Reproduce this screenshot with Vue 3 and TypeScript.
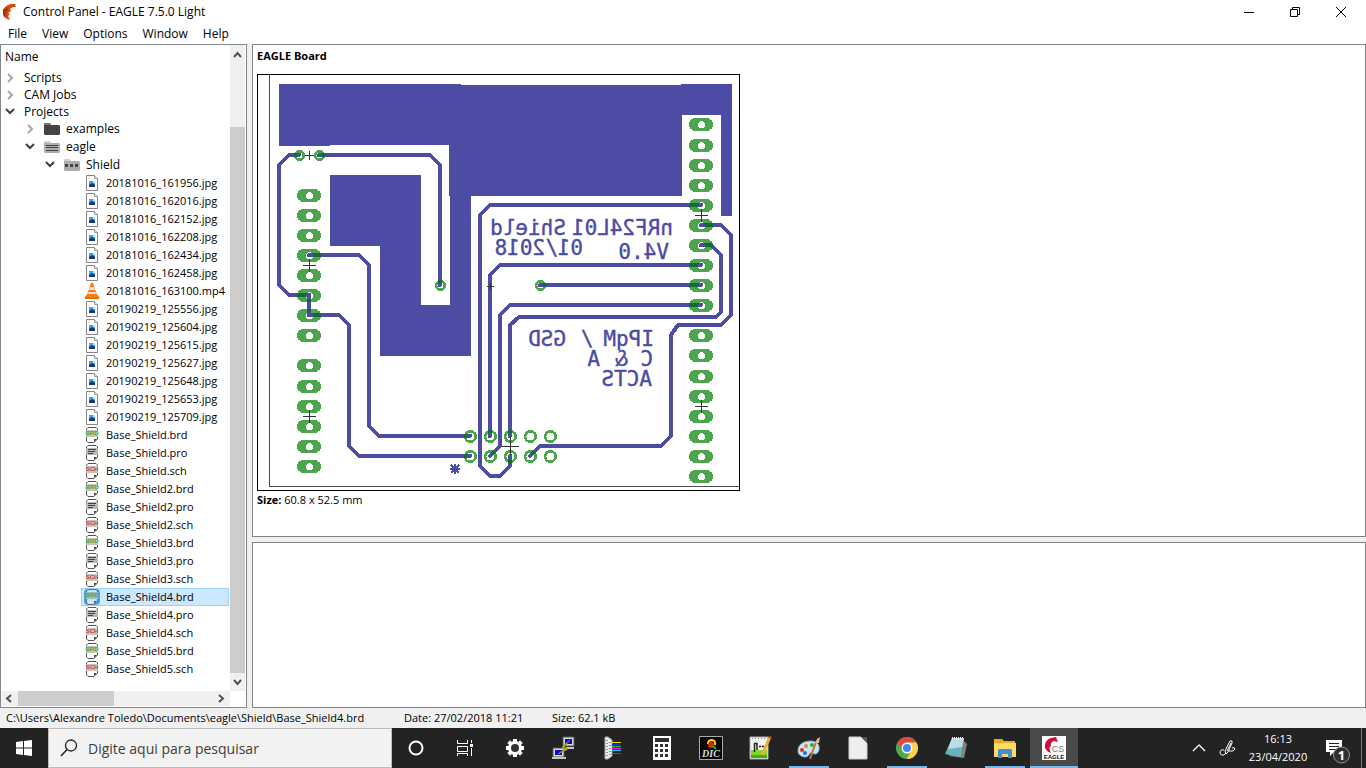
<script setup lang="ts">
interface TreeRow {
  label: string
  depth: number
  icon?: string
  tag?: string
  state?: 'open' | 'closed'
  selected?: boolean
}

const menus: string[] = ['File', 'View', 'Options', 'Window', 'Help']

const roots: TreeRow[] = [
  { label: 'Scripts', depth: 0, state: 'closed' },
  { label: 'CAM Jobs', depth: 0, state: 'closed' },
  { label: 'Projects', depth: 0, state: 'open' },
  { label: 'examples', depth: 1, state: 'closed', icon: 'folder-dark' },
  { label: 'eagle', depth: 1, state: 'open', icon: 'folder-lines' },
  { label: 'Shield', depth: 2, state: 'open', icon: 'folder-dots' },
]

const files: string[] = [
  '20181016_161956.jpg', '20181016_162016.jpg', '20181016_162152.jpg', '20181016_162208.jpg',
  '20181016_162434.jpg', '20181016_162458.jpg', '20181016_163100.mp4', '20190219_125556.jpg',
  '20190219_125604.jpg', '20190219_125615.jpg', '20190219_125627.jpg', '20190219_125648.jpg',
  '20190219_125653.jpg', '20190219_125709.jpg',
  'Base_Shield.brd', 'Base_Shield.pro', 'Base_Shield.sch',
  'Base_Shield2.brd', 'Base_Shield2.pro', 'Base_Shield2.sch',
  'Base_Shield3.brd', 'Base_Shield3.pro', 'Base_Shield3.sch',
  'Base_Shield4.brd', 'Base_Shield4.pro', 'Base_Shield4.sch',
  'Base_Shield5.brd', 'Base_Shield5.sch',
]

const tags: Record<string, string> = { brd: 'BRD', sch: 'SCH' }

const rows: TreeRow[] = [
  ...roots,
  ...files.map((label) => {
    const icon = label.split('.')[1]
    return { label, depth: 3, icon, tag: tags[icon], selected: label === 'Base_Shield4.brd' }
  }),
]

const traces: string[] = [
  'M299 155H289L279 165V285L289 295H309V315H339L349 325V446L359 456H470',
  'M319 155H430L440 165V285',
  'M309 255H359L369 265V426L379 436H470',
  'M701 205H490L480 215V466L490 476H500L510 466V456',
  'M701 265H500L490 275V436',
  'M540 285H701',
  'M701 305H510L500 315V446L490 456',
  'M701 245H711L721 255V312L716 317H519L510 325V436',
  'M701 225H721L731 235V315L721 325H678L671 335V436L661 446H540L530 456',
]

const pads = [
  ...[195, 215, 235, 255, 275, 295, 315, 335, 365, 386, 406, 426, 446, 466].map((y) => ({ x: 309, y, hole: 3.5 })),
  ...[124, 145, 165, 185, 205, 225, 245, 265, 285, 305, 335, 355, 376, 396, 416, 436, 456, 476].map((y) => ({ x: 701, y, hole: 3.5 })),
]

const vias = [
  ...[[299, 155], [319, 155], [440, 285], [540, 285]].map(([x, y]) => ({ x, y, r: 5.5, hole: 3 })),
  ...[470, 490, 510, 530, 550].flatMap((x) => [436, 456].map((y) => ({ x, y, r: 6.5, hole: 4 }))),
]

const holes = [...pads, ...vias]

const crosses: [number, number, number][] = [
  [309, 155, 4], [309, 265, 6], [309, 416, 6], [701, 215, 6], [701, 406, 6], [490, 286, 3], [510, 446, 8],
]

const silk: [string, number, number][] = [
  ['nRF24L01', 673, 235], ['Shield', 566, 235], ['V4.0', 669, 259], ['01/2018', 583, 255],
  ['IPqM', 654, 346], ['/', 593, 346], ['GSD', 566, 346],
  ['C', 653, 366], ['&', 628, 366], ['A', 600, 366], ['ACTS', 652, 386],
]

const apps = [
  { id: 'settings', name: 'Settings' },
  { id: 'putty', name: 'PuTTY' },
  { id: 'port', name: 'Terminal' },
  { id: 'calc', name: 'Calculator' },
  { id: 'dic', name: 'DIC' },
  { id: 'editor', name: 'Notepad++' },
  { id: 'paint', name: 'Paint', open: true },
  { id: 'office', name: 'LibreOffice' },
  { id: 'chrome', name: 'Chrome', open: true },
  { id: 'notes', name: 'Notepad' },
  { id: 'explorer', name: 'File Explorer', open: true },
  { id: 'eagle', name: 'EAGLE', open: true, active: true },
]
</script>

<template>
  <div class="desktop">
    <svg class="defs" aria-hidden="true">
      <symbol id="i-folder-dark" viewBox="0 0 16 16">
        <path d="M0 3V2H6L7 3V4H0Z" fill="#777" /><path d="M0 4H15L16 5V13L15 14H1L0 13Z" fill="#444441" />
      </symbol>
      <symbol id="i-folder-lines" viewBox="0 0 16 16">
        <path d="M0 4V2H6L7 4Z" fill="#d2d2d2" /><path d="M0 4H15L16 5V13L15 14H1L0 13Z" fill="#acacac" />
        <path d="M2 6.500H14M2 8.500H14M2 11.500H14" stroke="#444" />
      </symbol>
      <symbol id="i-folder-dots" viewBox="0 0 16 16">
        <path d="M0 4V2H6L7 4Z" fill="#d2d2d2" /><path d="M0 4H15L16 5V13L15 14H1L0 13Z" fill="#acacac" />
        <path d="M1 7H4V10H1ZM6 7H9V10H6ZM11 7H14V10H11Z" fill="#444" />
      </symbol>
      <symbol id="i-jpg" viewBox="0 0 16 16">
        <path d="M2.500 .5H10.500L13.500 3.500V15.500H2.500Z" fill="#fff" stroke="#858585" />
        <path d="M10.500 .5V3.500H13.500" fill="#eee" stroke="#999" />
        <path d="M5 6H11V12H5Z" fill="#3ca7ea" /><path d="M5 10L8 8L11 10V12H5Z" fill="#14386f" /><path d="M9 6H11V8H9Z" fill="#a7e6ff" />
      </symbol>
      <symbol id="i-mp4" viewBox="0 0 16 16">
        <path d="M7 0H9L13 12H3Z" fill="#f57b10" /><path d="M6 4H10L11 7H5ZM4.500 9H11.500L12 11H4Z" fill="#e6e3df" />
        <path d="M3 10L2 12H14L13 10L15 14V15.500H1V14Z" fill="#ef870d" /><path d="M1 14H15V16H1Z" fill="#e66b00" />
      </symbol>
      <symbol id="i-brd" viewBox="0 0 16 16">
        <path d="M4 .5H12L13.500 2V12L10 15.500H4L2.500 14V2Z" fill="#fff" stroke="#555" />
        <path d="M2 3H14V10H2Z" fill="#bfc5bf" /><path d="M10 15V12H13Z" fill="#444" />
      </symbol>
      <symbol id="i-sch" viewBox="0 0 16 16">
        <path d="M4 .5H12L13.500 2V12L10 15.500H4L2.500 14V2Z" fill="#fff" stroke="#555" />
        <path d="M2 3H14V10H2Z" fill="#c9c1c1" /><path d="M10 15V12H13Z" fill="#444" />
      </symbol>
      <symbol id="i-pro" viewBox="0 0 16 16">
        <path d="M4 .5H12L13.500 2V12L10 15.500H4L2.500 14V2Z" fill="#fff" stroke="#555" />
        <path d="M2 3H14V10H2Z" fill="#b8b8b8" /><path d="M10 15V12H13Z" fill="#444" />
        <path d="M4 4.500H12M4 6.500H11M4 8.500H9" stroke="#444" />
      </symbol>

      <symbol id="a-settings" viewBox="0 0 24 24">
        <g fill="#fff"><path v-for="a in [0, 45, 90, 135]" :key="a" d="M10 3H14V21H10Z" :transform="`rotate(${a} 12 12)`" /></g>
        <circle cx="12" cy="12" r="5.500" fill="#303030" stroke="#fff" stroke-width="3" />
      </symbol>
      <symbol id="a-putty" viewBox="0 0 24 24">
        <path d="M11 1H22V10H11ZM1 12H12V21H1Z" fill="#d8d8d8" stroke="#555" /><path d="M13 3H20V8H13ZM3 14H10V19H3Z" fill="#0808dd" />
        <path d="M10 11H22V13H12ZM0 21H14V23H0Z" fill="#c6c6c6" /><path d="M18 4L10 11L14 12L6 18L16 13L12 11Z" fill="#ff0" stroke="#8a8500" />
      </symbol>
      <symbol id="a-port" viewBox="0 0 24 24">
        <path d="M4 1H7L11 4V20L7 23H4Z" fill="#eee" stroke="#aaa" /><path d="M6 4V21M9 6V19" stroke="#333" stroke-dasharray="1 2" />
        <path d="M11 6.500H20" stroke="#e5dc00" /><path d="M11 8.500H19" stroke="#1d28ff" stroke-width="2" /><path d="M11 10.500H20" stroke="#18b52a" />
        <path d="M11 12.500H20" stroke="#f0f" stroke-width="2" /><path d="M11 14.500H20" stroke="#0cc" /><path d="M11 17.500H20" stroke="#f01616" />
      </symbol>
      <symbol id="a-calc" viewBox="0 0 24 24">
        <path d="M3 0H21V24H3Z" fill="#fff" /><path d="M5 2H19V6H5Z" fill="#303030" />
        <path d="M5 9.500H8M10 9.500H13M15 9.500H18M5 14.500H8M10 14.500H13M15 14.500H18M5 19.500H8M10 19.500H13M15 19.500H18" stroke="#303030" stroke-width="3" />
      </symbol>
      <symbol id="a-dic" viewBox="0 0 24 24">
        <path d="M.5 .5H23.500V23.500H.5Z" fill="#050505" stroke="#aaa" />
        <path d="M9 8Q9 4 13 4Q17 5 16 9" fill="none" stroke="#f5e000" stroke-width="2" /><circle cx="12" cy="9" r="3" fill="#e42410" /><path d="M14 10L17 13" stroke="#17b827" stroke-width="2" />
      </symbol>
      <symbol id="a-editor" viewBox="0 0 24 24">
        <path d="M2 1H20V23H2Z" fill="#f4f6f2" stroke="#aaa" /><path d="M3 14H19V22H3Z" fill="#83d52b" /><path d="M3 19H19V22H3Z" fill="#4aaa10" />
        <path d="M6.500 16V7.500H9V14M11 10.500H13M14 10.500H16" fill="none" stroke="#222" stroke-width="1.500" /><path d="M4 2.500H19" stroke="#888" stroke-dasharray="1 2" />
        <path d="M22 1L14 19" stroke="#edae2e" stroke-width="3" /><path d="M22 0L23 3" stroke="#b33b2d" stroke-width="2" />
      </symbol>
      <symbol id="a-paint" viewBox="0 0 24 24">
        <path d="M1 15C1 8 7 5 14 5C20 5 23 9 22 14C21 18 18 19 15 17C12 16 13 20 9 21C5 21 1 19 1 15Z" fill="#c8e5f5" stroke="#79aac9" />
        <circle cx="5" cy="14" r="2" fill="#df2a2c" /><circle cx="9" cy="10" r="2" fill="#ed8a1c" /><circle cx="15" cy="9" r="2" fill="#38aa39" /><circle cx="8" cy="17" r="2" fill="#2868ce" />
        <path d="M19 6L13 23" stroke="#c77331" stroke-width="2" /><path d="M18 7L20 3L23 1L22 7Z" fill="#e2bd8b" />
      </symbol>
      <symbol id="a-office" viewBox="0 0 24 24">
        <path d="M3 1H15L21 7V23H3Z" fill="#eee" stroke="#ccc" /><path d="M15 1H21V7Z" fill="#555" />
      </symbol>
      <symbol id="a-chrome" viewBox="0 0 24 24">
        <circle cx="12" cy="12" r="11" fill="#4cab51" /><path d="M2.500 6.500A11 11 0 0 1 21.500 6.500H12A5.500 5.500 0 0 0 7 14Z" fill="#dd4b3e" />
        <path d="M21.500 6.500A11 11 0 0 1 11.500 23L17 14A6 6 0 0 0 12 6.500Z" fill="#fdd047" /><circle cx="12" cy="12" r="5.500" fill="#fff" /><circle cx="12" cy="12" r="4" fill="#4587f1" />
      </symbol>
      <symbol id="a-notes" viewBox="0 0 24 24">
        <path d="M18 3L23 8L20 22L5 20Z" fill="#8a8175" /><path d="M8 2H20L17 21L1 18Z" fill="#66b2c0" /><path d="M8 2H20L18 11L4 13Z" fill="#b7dfe5" /><path d="M8 2H20" stroke="#eee" stroke-width="2" stroke-dasharray="1 1" />
      </symbol>
      <symbol id="a-explorer" viewBox="0 0 24 24">
        <path d="M1 3H9L11 5H22V21H1Z" fill="#e9ab28" /><path d="M1 7H23V21H1Z" fill="#ffda67" /><path d="M5 22V14L6 13H18L19 14V22H15V18H9V22Z" fill="#3e91d5" />
      </symbol>
      <symbol id="a-eagle" viewBox="0 0 24 24">
        <path d="M0 0H24V24H0Z" fill="#fff" /><path d="M14 1Q2 2 3 12Q5 16 9 17Q6 11 9 10Q8 6 12 5L16 6Z" fill="#d20b3d" />
      </symbol>
    </svg>

    <header class="titlebar">
      <svg class="logo" width="14" height="16" viewBox="0 0 14 16"><path d="M14 0Q3-1 1 7Q1 12 5 15L8 16L6 12L8 10L6 9L9 7L8 5L11 3H14L13 1Z" fill="#d44910" /><path d="M1 5V11L3 14L4 9L6 4Z" fill="#a93408" /></svg>
      <h1>Control Panel - EAGLE 7.5.0 Light</h1>
      <div class="window-buttons">
        <button aria-label="Minimize"><svg width="12" height="12" viewBox="0 0 12 12"><path d="M1 6.500H11" /></svg></button>
        <button aria-label="Restore"><svg width="12" height="12" viewBox="0 0 12 12"><path d="M1.500 3.500H8.500V10.500H1.500ZM3.500 3V1.500H10.500V8.500H9" /></svg></button>
        <button aria-label="Close"><svg width="12" height="12" viewBox="0 0 12 12"><path d="M1 1L11 11M11 1L1 11" /></svg></button>
      </div>
    </header>
    <nav class="menubar"><button v-for="m in menus" :key="m">{{ m }}</button></nav>

    <main class="workspace">
      <section class="side">
        <div class="side-main">
          <div class="tree-area">
            <div class="tree-head">Name</div>
            <ul role="tree" aria-label="Name">
              <li v-for="r in rows" :key="r.label" role="treeitem" :class="['row', 'depth-' + r.depth]" :aria-selected="!!r.selected">
                <svg class="twisty" width="12" height="12" viewBox="0 0 12 12">
                  <path v-if="r.state === 'closed'" d="M4 2L8 6L4 10" stroke="#a6a6a6" />
                  <path v-if="r.state === 'open'" d="M2 3L6 7L10 3" stroke="#404040" />
                </svg>
                <span :class="['entry', { selected: r.selected }]">
                  <svg v-if="r.icon" width="16" height="16">
                    <use :href="'#i-' + r.icon" />
                    <text v-if="r.tag" x="8" y="8" text-anchor="middle" :class="['tag', r.icon]">{{ r.tag }}</text>
                  </svg>
                  <span>{{ r.label }}</span>
                </span>
              </li>
            </ul>
          </div>
          <div class="vbar">
            <svg width="15" height="18" viewBox="0 0 15 18"><path d="M4 12L7.500 8L11 12" /></svg>
            <div class="vthumb"></div>
            <svg width="15" height="18" viewBox="0 0 15 18"><path d="M4 7L7.500 11L11 7" /></svg>
          </div>
        </div>
        <div class="hbar">
          <svg width="17" height="15" viewBox="0 0 17 15"><path d="M10 4L6 7.500L10 11" /></svg>
          <div class="hthumb"></div>
          <svg width="17" height="15" viewBox="0 0 17 15"><path d="M6 4L10 7.500L6 11" /></svg>
        </div>
      </section>

      <div class="panes">
        <section class="pane preview">
          <h2>EAGLE Board</h2>
          <svg class="board" width="483" height="417" viewBox="257 74 483 417" role="img" aria-label="Board preview">
            <defs>
              <g id="traces"><path v-for="t in traces" :key="t" :d="t" /></g>
              <g id="lands">
                <rect v-for="p in pads" :key="p.x + '-' + p.y" :x="p.x - 12" :y="p.y - 6" width="24" height="13" rx="7" ry="6" />
                <circle v-for="v in vias" :key="v.x + '-' + v.y" :cx="v.x + .5" :cy="v.y + .5" :r="v.r" />
              </g>
              <clipPath id="land-clip">
                <rect v-for="p in pads" :key="p.x + '-' + p.y" :x="p.x - 12" :y="p.y - 6" width="24" height="13" rx="7" ry="6" />
                <circle v-for="v in vias" :key="v.x + '-' + v.y" :cx="v.x + .5" :cy="v.y + .5" :r="v.r" />
              </clipPath>
              <clipPath id="hole-clip">
                <circle v-for="h in holes" :key="h.x + '-' + h.y" :cx="h.x + .5" :cy="h.y + .5" :r="h.hole" />
              </clipPath>
            </defs>
            <rect x="257" y="74" width="483" height="417" fill="#fff" />
            <path d="M269.500 75V486.500H739" fill="none" stroke="#4c4c4c" />
            <path d="M279 84H461V85H681V84H732V216H721V115H682V196H471V356H380V246H330V175H421V305H450V196H449V145H330V146H279Z" fill="#4c4ca5" />
            <use href="#traces" class="trace" />
            <use href="#lands" fill="#4ca54c" />
            <g clip-path="url(#land-clip)"><use href="#traces" class="trace under" /></g>
            <circle v-for="h in holes" :key="h.x + '-' + h.y" :cx="h.x + .5" :cy="h.y + .5" :r="h.hole" fill="#fff" />
            <g clip-path="url(#hole-clip)"><use href="#traces" class="trace" /></g>
            <path v-for="c in crosses" :key="c[0] + '-' + c[1]" class="cross" :d="`M${c[0] - c[2]} ${c[1] + .5}h${c[2] * 2 + 1}M${c[0] + .5} ${c[1] - c[2]}v${c[2] * 2 + 1}`" />
            <path d="M450 469H460M455 464V474M451 465L459 473M459 465L451 473" stroke="#4c4ca5" stroke-width="2" />
            <text v-for="s in silk" :key="s[0] + s[1]" class="silk" :transform="`translate(${s[1]} ${s[2]}) scale(-1 1)`">{{ s[0] }}</text>
            <rect x="257.500" y="74.500" width="482" height="416" fill="none" stroke="#000" />
          </svg>
          <p class="size"><b>Size:</b> 60.8 x 52.5 mm</p>
        </section>
        <section class="pane"></section>
      </div>
    </main>

    <footer class="status">
      <span>C:\Users\Alexandre Toledo\Documents\eagle\Shield\Base_Shield4.brd</span>
      <span>Date: 27/02/2018 11:21</span>
      <span>Size: 62.1 kB</span>
    </footer>

    <div class="taskbar">
      <button class="task" aria-label="Start"><svg width="16" height="16" viewBox="0 0 16 16" fill="#fff"><path d="M0 2L7 1V7.500H0ZM8 1L16 0V7.500H8ZM0 8.500H7V15L0 14ZM8 8.500H16V16L8 15Z" /></svg></button>
      <label class="search">
        <svg width="18" height="18" viewBox="0 0 18 18" fill="none" stroke="#222"><circle cx="11" cy="6.500" r="5.500" stroke-width="1.300" /><path d="M7 10.500L1 17" stroke-width="1.500" /></svg>
        <input type="text" placeholder="Digite aqui para pesquisar" aria-label="Digite aqui para pesquisar" />
      </label>
      <button class="task" aria-label="Cortana"><svg width="16" height="16" viewBox="0 0 16 16"><circle cx="8" cy="8" r="6.500" fill="none" stroke="#fff" stroke-width="2" /></svg></button>
      <button class="task" aria-label="Task View"><svg width="17" height="16" viewBox="0 0 17 16" fill="none" stroke="#fff"><path d="M1.500 0V3.500H11.500V0M1.500 6.500H11.500V11.500H1.500ZM1.500 16V13.500H11.500V16M15.500 0V3M15.500 8V16" /><path d="M14 4H17V7H14Z" fill="#fff" stroke="none" /></svg></button>
      <div class="apps">
        <button v-for="a in apps" :key="a.id" :aria-label="a.name" :class="['task', { open: a.open, active: a.active }]">
          <svg width="24" height="24">
            <use :href="'#a-' + a.id" />
            <text v-if="a.id === 'dic'" x="12" y="21" text-anchor="middle" class="dic">DIC</text>
            <template v-if="a.id === 'eagle'">
              <text x="16" y="16" text-anchor="middle" class="cs">CS</text>
              <text x="12" y="23" text-anchor="middle" class="eagle-tag">EAGLE</text>
            </template>
          </svg>
        </button>
      </div>
      <div class="tray">
        <button aria-label="Show hidden icons"><svg width="14" height="8" viewBox="0 0 14 8"><path d="M1 7L7 1L13 7" fill="none" stroke="#fff" stroke-width="1.300" /></svg></button>
        <button aria-label="Pen"><svg width="17" height="17" viewBox="0 0 17 17" fill="none" stroke="#fff"><path d="M7 14L6 11L11 1Q14 0 13 3L9 12ZM8 11L12 3M5 10Q1 9 1 13Q2 16 5 15L7 13M10 11Q15 12 16 9Q16 7 13 8" /></svg></button>
        <button class="clock"><span>16:13</span><span>23/04/2020</span></button>
        <button aria-label="Notifications" class="notice">
          <svg width="24" height="26" viewBox="0 0 24 26"><path d="M0 2H16V14H8L4 18V14H0Z" fill="#fff" /><path d="M3 5.500H13M3 8.500H13M3 11.500H10" stroke="#222" /><circle cx="15.500" cy="17" r="8" fill="#303030" stroke="#999" /><text x="15.500" y="22" text-anchor="middle" class="count" fill="#fff">1</text></svg>
        </button>
        <span class="peek"></span>
      </div>
    </div>
  </div>
</template>

<style>
body { margin: 0; }
</style>

<style scoped>
* { box-sizing: border-box; }
.desktop { min-height: 100vh; display: flex; flex-direction: column; background: #fff; color: #000; font: 12px/18px "Open Sans", "Noto Sans", sans-serif; }
.defs { position: absolute; width: 0; height: 0; }
button { border: 0; padding: 0; background: none; font: inherit; color: inherit; }
.titlebar { height: 23px; display: flex; align-items: center; padding-left: 2px; }
.logo { margin-right: 7px; }
h1 { margin: 0; font-size: 12px; font-weight: 400; flex: 1; }
.window-buttons { display: flex; height: 21px; padding-right: 2px; }
.window-buttons button { width: 46px; display: grid; place-items: center; }
.window-buttons svg { fill: none; stroke: #000; }
.menubar { height: 21px; display: flex; gap: 15px; padding-left: 8px; }
.menubar button { line-height: 21px; }
.workspace { flex: 1; min-height: 0; display: flex; gap: 5px; background: #f0f0f0; }
.side { width: 247px; flex: none; border: 1px solid #828790; padding: 0 1px 1px 0; display: flex; flex-direction: column; background: #fff; }
.side-main { flex: 1; display: flex; }
.tree-area { flex: 1; min-width: 0; }
.tree-head { height: 24px; line-height: 24px; padding-left: 4px; }
ul { list-style: none; margin: 0; padding: 0; }
.row { display: flex; align-items: center; height: 18px; white-space: nowrap; }
.depth-0 { height: 17px; padding-left: 3px; }
.depth-1 { padding-left: 23px; }
.depth-2 { padding-left: 43px; }
.depth-3 { padding-left: 63px; font-size: 11px; }
.twisty { flex: none; margin-right: 5px; fill: none; stroke-width: 2; }
.entry { flex: 1; height: 18px; display: flex; align-items: center; gap: 6px; padding-left: 3px; margin-right: 1px; }
.selected { background: #cce8ff; box-shadow: inset 0 0 0 1px #99d1ff; }
.selected svg { background: #4aa4e8; border-radius: 4px; }
.selected use { opacity: .7; }
.tag { font: bold 6px "Liberation Sans", sans-serif; }
.brd { fill: #43a743; }
.sch { fill: #c83d45; }
.vbar { width: 15px; background: #f0f0f0; display: flex; flex-direction: column; }
.vbar svg, .hbar svg { flex: none; fill: none; stroke: #505050; stroke-width: 2; }
.vthumb { flex: 1; margin-top: 64px; background: #cdcdcd; }
.hbar { height: 15px; display: flex; margin-right: 15px; background: #f0f0f0; }
.hthumb { width: 96px; margin-right: auto; background: #cdcdcd; }
.panes { flex: 1; min-width: 0; display: grid; grid-template-rows: minmax(0, 493fr) minmax(0, 166fr); gap: 5px; }
.pane { border: 1px solid #828282; background: #fff; }
.preview { padding: 2px 4px; }
h2 { margin: 0 0 9px; font-size: 11px; line-height: 18px; font-weight: 700; }
.board { display: block; shape-rendering: crispEdges; }
.trace { fill: none; stroke: #4c4ca5; stroke-width: 4; stroke-linecap: round; stroke-linejoin: round; }
.under { stroke: #126c30; }
.cross { stroke: #333; }
.silk { font: 21px "DejaVu Sans Mono", monospace; fill: #4c4ca5; stroke: #4c4ca5; stroke-width: .4; }
.size { margin: 0; font-size: 11px; line-height: 18px; }
.status { height: 20px; display: grid; grid-template-columns: 398px 148px auto; align-items: center; padding-left: 6px; background: #f0f0f0; font-size: 11px; }
.taskbar { height: 40px; display: flex; background: #232323; color: #fff; }
.task { width: 48px; height: 40px; flex: none; display: grid; place-items: center; }
.search { width: 344px; flex: 0 1 auto; display: flex; align-items: center; padding-left: 11px; gap: 10px; background: #f2f2f2; border: 1px solid #bbb; }
.search svg { flex: none; }
.search input { flex: 1; min-width: 0; border: 0; outline: 0; padding: 0; background: none; font: 14px "Open Sans", sans-serif; color: #333; }
.search input::placeholder { color: #3d3d3d; opacity: 1; }
.apps { display: flex; gap: 1px; padding-left: 3px; }
.open { background: linear-gradient(#76b9ed, #76b9ed) center bottom / 40px 2px no-repeat; }
.active { background: linear-gradient(#76b9ed, #76b9ed) center bottom / 48px 2px no-repeat #4a4a4a; }
.dic { font: italic bold 10px "Liberation Serif", serif; fill: #ddd; }
.cs { font: 9px "Liberation Sans", sans-serif; fill: #777; }
.eagle-tag { font: bold 6px "Liberation Sans", sans-serif; fill: #111; }
.tray { margin-left: auto; display: flex; align-items: center; }
.tray button { width: 28px; display: grid; place-items: center; }
.tray .clock { width: 74px; line-height: 18px; font-size: 11px; }
.tray .notice { width: 46px; padding-top: 5px; }
.count { font: bold 13px "Open Sans", sans-serif; }
.peek { width: 5px; height: 40px; border-left: 1px solid #777; }
</style>
